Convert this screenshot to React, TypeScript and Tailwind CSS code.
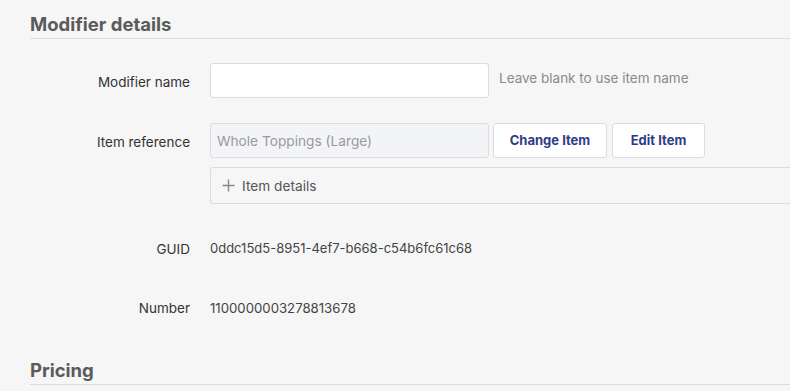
import React from "react";

export default function App() {
  const font = { fontFamily: "Inter, 'Noto Sans', sans-serif" };
  return (
    <div className="w-[790px] h-[391px] overflow-hidden bg-[#f6f6f6] text-[#333]" style={font}>
      <div className="pl-[30px]">
        <div className="pt-[13px] border-b border-[#dcdcdc] h-[39px]">
          <h2 className="text-[18.5px] leading-[22px] font-bold text-[#5b5b5b]">Modifier details</h2>
        </div>

        <div className="flex items-center mt-[24px] h-[35px]">
          <div className="w-[160px] text-right text-[13.5px] text-[#333] pt-[4px]">Modifier name</div>
          <div className="ml-[20px] w-[279px] h-[35px] bg-white border border-[#dcdcdc] rounded-[3px]"></div>
          <div className="ml-[10px] self-start mt-[5px] text-[13.5px] text-[#8a8a8a]">Leave blank to use item name</div>
        </div>

        <div className="flex items-center mt-[25px] h-[35px]">
          <div className="w-[160px] text-right text-[13.5px] text-[#333] pt-[4px]">Item reference</div>
          <div className="ml-[20px] w-[279px] h-[35px] bg-[#f3f4f8] border border-[#dcdcdc] rounded-[3px] flex items-center px-[6px] pt-[1px] text-[13.7px] text-[#9a9a9a]">
            Whole Toppings (Large)
          </div>
          <button className="ml-[4px] w-[114px] h-[35px] pt-[1px] bg-white border border-[#dcdcdc] rounded-[3px] text-[13px] font-bold text-[#2f3b86]">
            Change Item
          </button>
          <button className="ml-[5px] w-[93px] h-[35px] pt-[1px] bg-white border border-[#dcdcdc] rounded-[3px] text-[13px] font-bold text-[#2f3b86]">
            Edit Item
          </button>
        </div>

        <div className="ml-[180px] mt-[9px] h-[37px] border border-r-0 border-[#dcdcdc] rounded-l-[3px] flex items-center pl-[11px] text-[13.7px] text-[#555]">
          <svg width="13" height="13" viewBox="0 0 13 13" className="mr-[7px]">
            <path d="M6.5 0.5V12.5M0.5 6.5H12.5" stroke="#8a8a8a" strokeWidth="1.4" />
          </svg>
          <span className="pt-[1px]">Item details</span>
        </div>

        <div className="flex items-center mt-[33px] h-[20px] pt-[4px]">
          <div className="w-[160px] text-right text-[13.5px] text-[#333]">GUID</div>
          <div className="ml-[20px] text-[13px] text-[#444]">0ddc15d5-8951-4ef7-b668-c54b6fc61c68</div>
        </div>

        <div className="flex items-center mt-[40px] h-[20px] pt-[3px]">
          <div className="w-[160px] text-right text-[13.5px] text-[#333]">Number</div>
          <div className="ml-[20px] text-[13.2px] text-[#444]">1100000003278813678</div>
        </div>

        <div className="mt-[40px] pt-[2px] border-b border-[#dcdcdc] h-[28px]">
          <h2 className="text-[18.5px] leading-[22px] font-bold text-[#5b5b5b]">Pricing</h2>
        </div>
      </div>
    </div>
  );
}
